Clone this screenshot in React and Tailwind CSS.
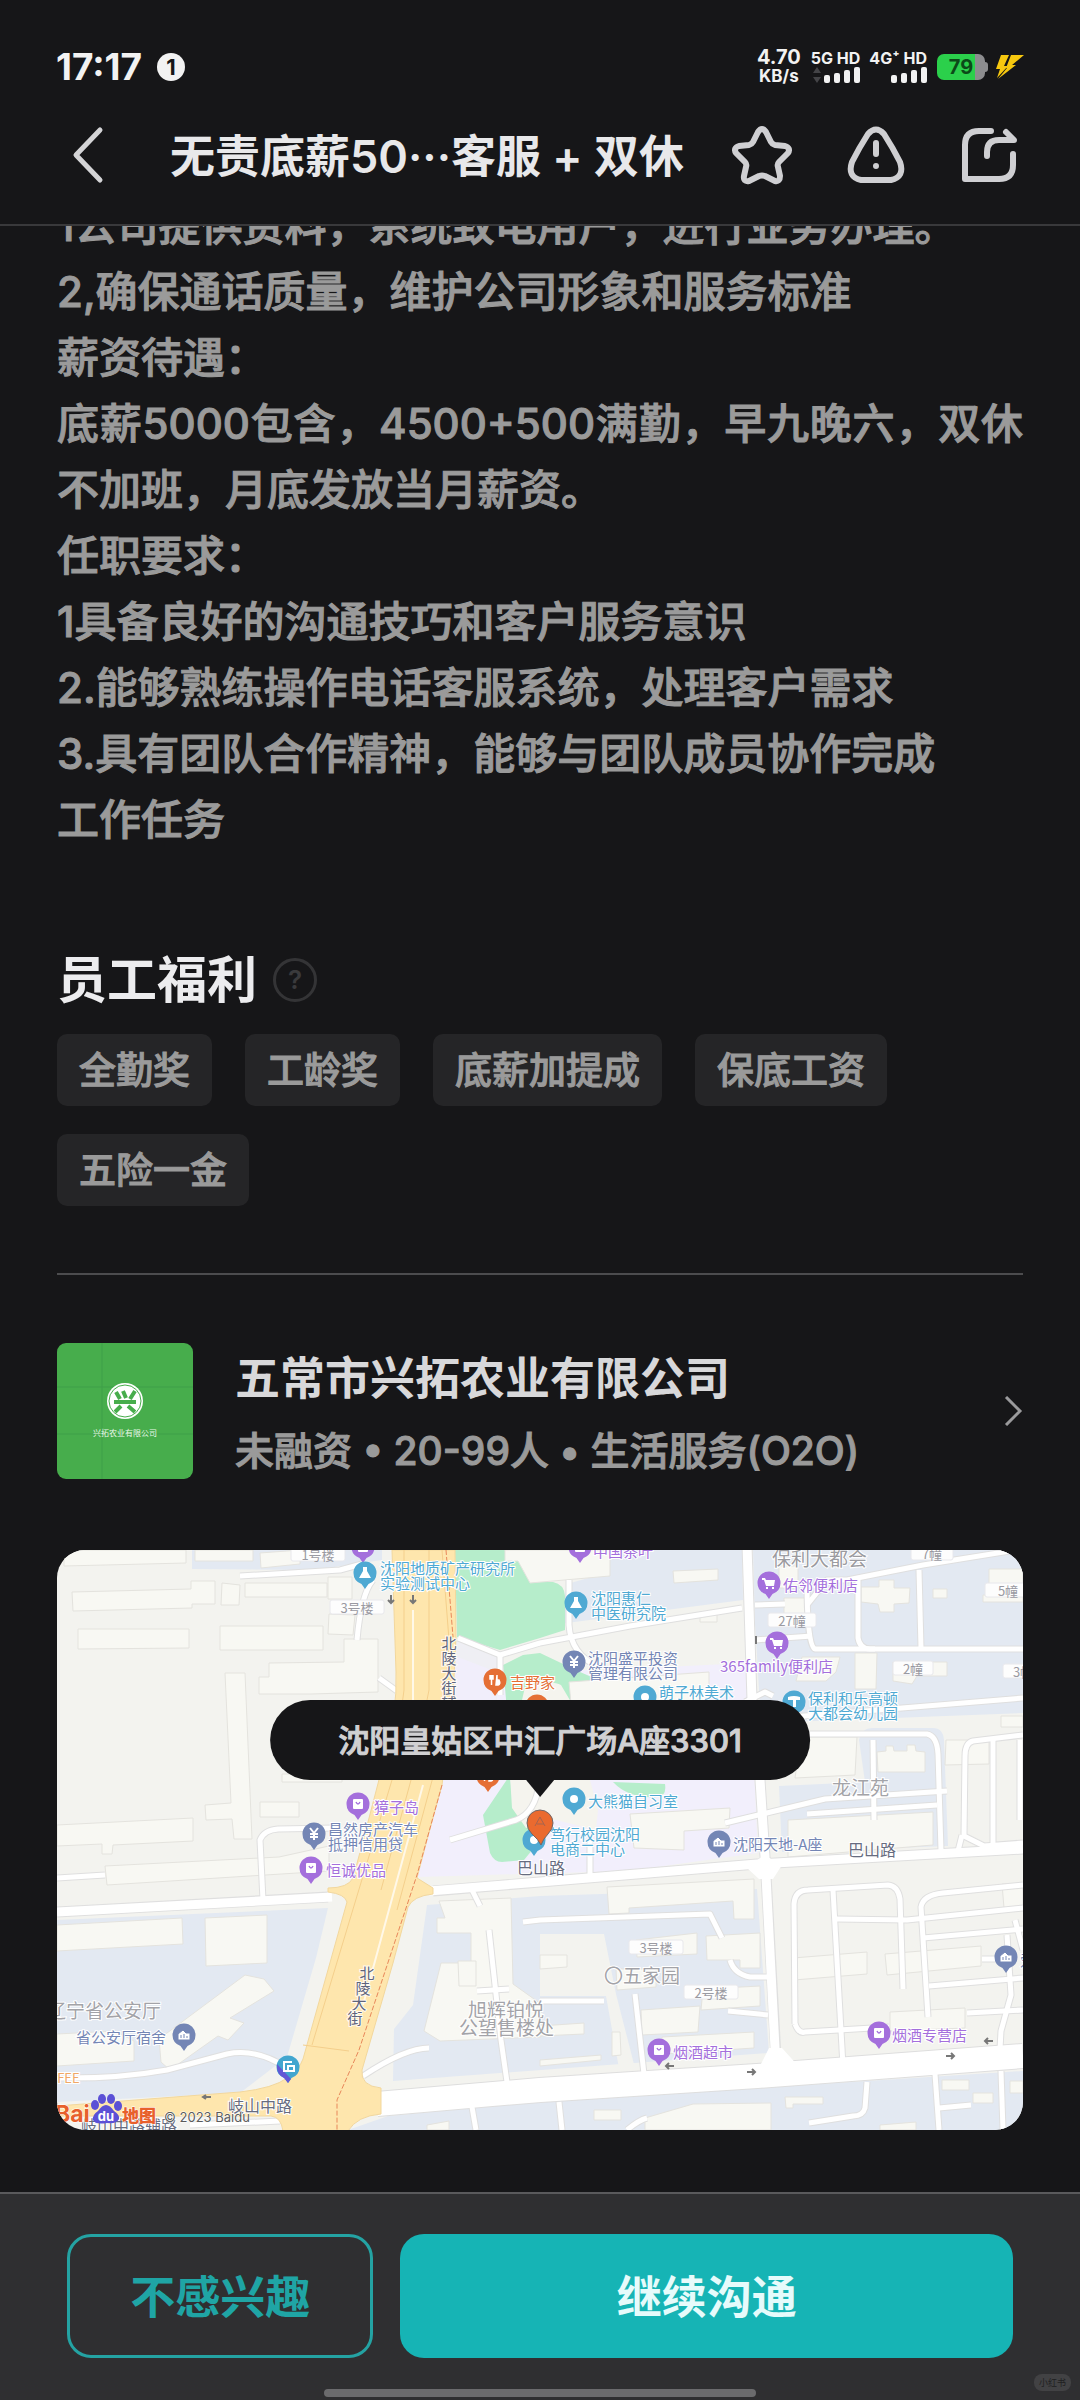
import React from "react";

const jobLines = [
  { text: "1公司提供资料，系统致电用户，进行业务办理。" },
  { text: "2,确保通话质量，维护公司形象和服务标准" },
  { text: "薪资待遇：" },
  { text: "底薪5000包含，4500+500满勤，早九晚六，双休", fill: true },
  { text: "不加班，月底发放当月薪资。" },
  { text: "任职要求：" },
  { text: "1具备良好的沟通技巧和客户服务意识" },
  { text: "2.能够熟练操作电话客服系统，处理客户需求" },
  { text: "3.具有团队合作精神，能够与团队成员协作完成" },
  { text: "工作任务" },
];

const benefits = ["全勤奖", "工龄奖", "底薪加提成", "保底工资", "五险一金"];

const BLUE = "#4fa9d3";
const NAVY = "#7486b5";
const PURPLE = "#a46fdc";
const ORANGE = "#e56f35";

const buildings = [
  "M7 0h122v13L7 16z", "M138 0h58v11h-58z", "M203 3l40-3v14l-39 4z", "M15 42l119-3v-8h24v23h-23v4L16 61z",
  "M165 33l18 2-1 20h-18z", "M188 33h82v14h-82z", "M271 27h24v22h-24z", "M21 79h111v19l-111 1z",
  "M163 76h103v24H163z", "M272 64l26 1-2 20-25-1z", "M212 113l75-1V89h34v53l-67 2h-52v-17h10z",
  "M168 123h20l7 166h-18l-2-20-26 1-1-15 26-2z", "M225 224h60v8h-60z", "M203 252h39v15h-39z",
  "M0 275l136-7v23l-80 4-1 9h-10v-10L0 296z", "M48 316l174-9 50-11v25l-222 14z",
  "M0 375l125-7 1 26L0 401z", "M148 368l62-3v48l-61 3z", "M102 489l86-64 19 4 10 12-44 27 14 5-16 17-10-4-48 34-9-8z",
  "M0 484l58-3 19 10v20L0 516z", "M382 351l72-3 2 86 28 20v33l-101 4-16-10 17-68h30v-30h-34v-15h8z", "M401 411h18v25h-17z",
  "M448 0h105v26l-80 7-12-22h-13z", "M616 21l45-2v11l-44 3z", "M643 64h17v8h-17z", "M512 132l140-10v36l-137 7z",
  "M722 16h19v22h-19z", "M727 48h22v24h-22z", "M804 37h18v-7h15v8h16l-1 15-15 1v8h-14l-2-8-17-2z", "M876 39h14v9h-14z",
  "M932 19h34v20h-34z", "M926 45h40v7h-40z", "M745 107h38l-4 15-10 9h-30z", "M798 103h22l-1 36h-21z", "M836 112h54v14h-30l-5 8-19-3z",
  "M744 187h56l-2 38-60 3z", "M820 202l9-1v-5h7l1 5h13v-6h8l1 6 9 1v20h-47z", "M889 190h43v24l-44 1z", "M944 166h22v11h-22z",
  "M573 264l100-6-1 20-45 3v19l-50-2z", "M731 270l145-8v33l-145 12z", "M550 337l147-8v40h-20l-1-18-104 7v5l-20 1z",
  "M579 390l61-7v21l-60 3z", "M649 386l54-3v35h-20v-8h-33z", "M646 439l57-3v20l-59 4z", "M559 419h40v18l-39 3z",
  "M584 460l59-4-2 26-56 3z", "M605 487l92-5v16l-92 6z", "M555 482h8l1 23-9 1z", "M483 476l44-3v11l-44 2z", "M483 510l61-5v5l-61 6z",
  "M483 405h27v12l-27 2z", "M736 408l74-6v22l-73 6z", "M828 404l96-8v20l-94 9z", "M833 462l75-4v20l-75 3z", "M945 334h21v23l-19 1z",
  "M588 568l48-14 78-1v27H588z", "M537 560h27v10h-27z", "M728 547h38v7h-30v4h-7z", "M885 530h27v10h-27z", "M916 543h20v10h-20z", "M953 531h13v12h-13z", "M823 575l36-3v8h-36z", "M370 575l22-4v9h-22z",
];

const minorRoads = [
  "M183 26l100-6 22-6", "M316 30q-12 14-16 60", "M401 88l42 17 40-12 90-17 112-18", "M443 105v40", "M322 128l18 13",
  "M512 30v45q2 30 30 42", "M698 55l30-1", "M698 90l57-4", "M688 152l20-10 8 4",
  "M750 55l20-25h20l76-15 100-16", "M801 30v58q2 11 12 11h153", "M862 20l2 78", "M750 30q0 66 8 69h60",
  "M735 167l231-19", "M710 184h160q10 2 11 20l3 96", "M816 190l1 80", "M750 264l130-9", "M668 273l100-24 122-8",
  "M966 185l-50 6q-8 2-8 15l-1 80 20 10 39-3", "M936 190v110", "M963 190v80", "M905 285l-5 20",
  "M206 350l-3-60q4-10 18-11l57-1", "M0 328l48-3", "M393 290l66-20q20-8 23-37", "M533 290v35",
  "M415 340l8 16", "M466 372l17-2 170-6 12 24", "M432 380l12 110 6 42", "M420 441l32-2", "M673 410q4 14 20 17h20",
  "M483 451h64", "M578 444l9 80", "M671 461l40 4",
  "M738 474l-1-120q1-14 14-14l80-5q10 1 12 14l3 90", "M776 340l10 176", "M738 474q4 10 10 8l84-5", "M780 369l70 1 116-12",
  "M966 335l-80 8q-20 2-22 14l7 110", "M866 388l100-9", "M958 370l8 30", "M950 385l4 60-10 36-1 18", "M872 436l94-8", "M910 463l56-3", "M925 409h20",
  "M306 526q42-28 66-28", "M0 528q60 1 110-8l60-16q30-6 60 14",
  "M810 532l-2 26q-2 8-12 8l-44 7", "M878 524l4 56", "M944 521l2 59", "M882 558l32-3", "M502 552l3 28", "M415 557l4 23", "M570 580q12-10 20-12", "M133 575l90-4",
];

const pins = [
  [306, -3, PURPLE, "bag"], [308, 23, BLUE, "flask"], [523, -3, PURPLE, "bag"], [519, 53, BLUE, "flask"], [712, 33, PURPLE, "cart"],
  [720, 93, PURPLE, "cart"], [517, 112, NAVY, "yen"], [438, 130, ORANGE, "food"], [480, 156, ORANGE, "food"], [588, 147, BLUE, "dot"],
  [737, 152, BLUE, "tee"], [431, 226, ORANGE, "food"], [301, 254, PURPLE, "bag"], [257, 284, NAVY, "yen"], [254, 318, PURPLE, "bag"],
  [517, 249, BLUE, "dot"], [477, 290, BLUE, "dot"], [662, 292, NAVY, "office"], [949, 407, NAVY, "office"], [127, 485, NAVY, "office"],
  [602, 500, PURPLE, "bag"], [822, 483, PURPLE, "bag"],
];

const labels = [
  [323, 17, BLUE, 15, "沈阳地质矿产研究所"], [323, 32, BLUE, 15, "实验测试中心"],
  [536, 0, PURPLE, 15, "中国茶叶"], [534, 47, BLUE, 15, "沈阳惠仁"], [534, 62, BLUE, 15, "中医研究院"],
  [531, 107, NAVY, 15, "沈阳盛平投资"], [531, 122, NAVY, 15, "管理有限公司"],
  [715, 7, "#9b9ba0", 19, "保利大都会"], [726, 34, PURPLE, 15, "佑邻便利店"],
  [663, 115, PURPLE, 15, "365family便利店"], [453, 131, ORANGE, 15, "吉野家"], [602, 141, BLUE, 15, "萌子林美术"],
  [751, 147, BLUE, 15, "保利和乐高顿"], [751, 162, BLUE, 15, "大都会幼儿园"],
  [317, 256, PURPLE, 15, "獐子岛"], [271, 278, NAVY, 15, "昌然房产汽车"], [271, 293, NAVY, 15, "抵押信用贷"],
  [269, 319, PURPLE, 15, "恒诚优品"], [531, 250, BLUE, 15, "大熊猫自习室"], [775, 236, "#a3a3a8", 19, "龙江苑"],
  [493, 283, BLUE, 15, "笃行校园沈阳"], [493, 298, BLUE, 15, "电商二中心"], [460, 317, "#676c80", 16, "巴山路"],
  [676, 293, NAVY, 15, "沈阳天地-A座"], [791, 299, "#676c80", 16, "巴山路"],
  [547, 424, "#a3a3a8", 19, "〇五家园"], [411, 458, "#a3a3a8", 19, "旭辉铂悦"], [402, 476, "#a3a3a8", 19, "公望售楼处"],
  [-10, 459, "#a3a3a8", 19, "辽宁省公安厅"], [19, 486, NAVY, 15, "省公安厅宿舍"], [963, 409, NAVY, 15, "爱"],
  [616, 501, PURPLE, 15, "烟酒超市"], [835, 484, PURPLE, 15, "烟酒专营店"],
  [171, 555, "#676c80", 16, "岐山中路"], [24, 575, "#676c80", 16, "岐山中路辅路"], [-7, 527, "#f0a866", 13, "FFEE"],
];

const tags = [
  [234, 4, 54, "1号楼"], [273, 57, 54, "3号楼"], [854, 3, 42, "7幢"], [928, 40, 46, "5幢"], [711, 70, 48, "27幢"],
  [836, 118, 40, "2幢"], [946, 121, 40, "3幢"], [572, 397, 54, "3号楼"], [627, 442, 54, "2号楼"],
];

function Glyph({ kind }) {
  if (kind === "flask") return <path d="M-2-6h4v4l4 7h-12l4-7z" fill="#fff" />;
  if (kind === "cart") return <path d="M-7-5h3l1 2h9l-1 6h-8l-2-6h-2zM-3 4h2v2h-2zM3 4h2v2h-2z" fill="#fff" />;
  if (kind === "yen") return <path d="M-4-6l4 5 4-5M0-1v7M-4 0h8M-4 3h8" fill="none" stroke="#fff" strokeWidth="2" />;
  if (kind === "food") return <path d="M-5-5v4h3v-4M-3.500-2v7M2-5v5h2q2 4-1 5h-2z" fill="#fff" stroke="#fff" strokeWidth="1.500" />;
  if (kind === "tee") return <path d="M-6-5q6-2 12 0v3h-4v7h-3v-7h-5z" fill="#fff" />;
  if (kind === "office") return <path d="M-6 5v-6l5-4 3 3h4v7zM-3 0v3M0-1v4M3 1v2" fill="#fff" stroke="#7486b5" strokeWidth="1" />;
  if (kind === "bag")
    return (
      <g>
        <rect x="-5" y="-5" width="10" height="10" rx="1" fill="#fff" />
        <path d="M-2-2q2 4 4 0" fill="none" stroke={PURPLE} strokeWidth="1.500" />
      </g>
    );
  return <circle r="4" fill="#fff" />;
}

const PIN = "M-11.500 0a11.500 11.500 0 1 1 23 0q0 8-8 11l-3.500 5-3.500-5q-8-3-8-11z";

function Vertical({ x, y, dx, text }) {
  return [...text].map((ch, i) => (
    <text key={i} x={x + dx * i} y={y + 15 * i} fontSize="15" fill="#5e647c" textAnchor="middle" dominantBaseline="central" stroke="#fffaf0" strokeWidth="2" paintOrder="stroke">
      {ch}
    </text>
  ));
}

function CityMap() {
  return (
    <svg viewBox="0 0 966 580" preserveAspectRatio="xMidYMid slice" className="block h-[580px] w-full" role="img" aria-label="地图">
      <rect width="966" height="580" fill="#f3f3ef" />
      <g fill="#e3e9f2">
        <path d="M135 0h190v10l-68 10-122-1zM538 0h147l1 50-184 24 8-40 28-8z" />
        <path d="M696 0h270v163l-262 10-6-100zM722 236l86-4-6-42q2-12 14-12h60q10 0 11 12l4 106-166 6z" />
        <path d="M0 370l271-12-12 50-29 99-47 36-183 9zM370 355l113-9 217-7 12 164-376 28 1-52 19-24z" />
        <path d="M331 566l152-14 483-31v59H291z" />
      </g>
      <path d="M398 100l48 20 96 0 150-7 9 190-131 18-210 6 10-92 15-8 12-80z" fill="#f2effc" />
      <path d="M483 384h64l12 60 20 78-16 2-14-78-66 0z" fill="#f3f3ef" />
      <g fill="#b6edcb">
        <path d="M398 0h72l8 20 5 12h13q11 2 12 14v34l-25 8-40 12-43-13z" />
        <path d="M446 115l20-10 17-2 40 19 28 12 40 22-20 16h-120z" />
        <path d="M453 225l-27 40 7 38q4 9 12 9l22-2 18-22-29-33zM556 232l52 2q2 12-8 13-28 2-44-15z" />
      </g>
      <path d="M398 90l42 16v50l-44-3z" fill="#efeff4" />
      <path d="M398 106l42 16-2 40h-42z" fill="#f1eefb" />
      <path d="M468 137q26-8 36-2l10 17 30 8v12h-84zM453 225l80 5 8 30-2 20-40-10-30 8-14-20z" fill="#f5f4ee" />
      <g fill="#f8f8f3" stroke="#e4e3de" strokeWidth="1">
        {buildings.map((d) => (
          <path key={d} d={d} />
        ))}
      </g>
      <g fill="none" strokeLinejoin="round">
        <g stroke="#dfdfdf" strokeWidth="7">
          {minorRoads.map((d) => (
            <path key={d} d={d} />
          ))}
        </g>
        <path d="M690-5L695 150l8 80 5 77 11 200M0 362l271-15M376 341l107-9 217-18 266-15" stroke="#dfdfdf" strokeWidth="11" />
        <path d="M320 554l163-14 217-14 266-20" stroke="#dedede" strokeWidth="26" />
        <g stroke="#fff" strokeWidth="5">
          {minorRoads.map((d) => (
            <path key={d} d={d} />
          ))}
        </g>
        <path d="M690-5L695 150l8 80 5 77 11 210M0 362l275-15M372 341l111-9 217-18 266-15" stroke="#fff" strokeWidth="9" />
        <path d="M320 554l163-14 217-14 266-20" stroke="#fff" strokeWidth="24" />
      </g>
      <path d="M690 318l17-13 18 10-9 14h-14zM696 530l16-32h13l18 20z" fill="#fff" />
      <path
        d="M335 0h63l1 87-3 60-11 88-15 55-10 38 16 10v6q-20 2-25 13l-15 56-31 107q-2 16 19 18v26q-24 2-33 17h-65q-2-14-12-15H0v-10l183-14q34-4 47-14 12-8 16-19l44-157q-2-8-19-10v-4q20 0 25-10l9-33 19-73q17-60 15-100z"
        fill="#fee6ad"
        stroke="#f2d79d"
        strokeWidth="1"
      />
      <g fill="none" stroke="#f4cf8c" strokeWidth="1">
        <path d="M347 0v140l-12 90-80 265M372 0v140l-18 90-30 110" />
        <path d="M385 0l7 90-6 100-46 170" />
        <path d="M246 495l46 6" />
      </g>
      <path d="M356 60v90M366 235l-60 220" stroke="#fff8e8" strokeWidth="2" fill="none" />
      <path d="M389 0l7 87M385 235l-25 90-58 175-22 50v30" fill="none" stroke="#e8875a" strokeWidth="1" strokeDasharray="5 2" />
      <g fill="none" stroke="#777" strokeWidth="2">
        <path d="M334 45v8m-3-3l3 3 3-3M356 45v8m-3-3l3 3 3-3M699 86v8" />
        <path d="M154 547h-8m3-2l-3 2 3 2M617 516h-8m3-3l-3 3 3 3M690 522h8m-3-3l3 3-3 3M936 491h-8m3-3l-3 3 3 3M889 506h8m-3-3l3 3-3 3" />
      </g>
      <g className="font-['Noto_Sans_CJK_SC',sans-serif]">
        {tags.map(([x, y, w, text]) => (
          <g key={x}>
            <rect x={x} y={y - 7} width={w} height="14" rx="2" fill="#fdfdfd" stroke="#e8e8ec" strokeWidth="1" />
            <text x={x + w / 2} y={y} fontSize="13" fill="#9a9aa2" textAnchor="middle" dominantBaseline="central">
              {text}
            </text>
          </g>
        ))}
        {labels.map(([x, y, color, size, text]) => (
          <text key={text + x} x={x} y={y} fontSize={size} fill={color} stroke="#fff" strokeWidth="2" paintOrder="stroke" dominantBaseline="central">
            {text}
          </text>
        ))}
        <Vertical x={392} y={92} dx={0} text="北陵大街辅路" />
        <Vertical x={310} y={422} dx={-4} text="北陵大街" />
      </g>
      {pins.map(([x, y, color, kind]) => (
        <g key={`${x}-${y}`} transform={`translate(${x} ${y})`}>
          <path d={PIN} fill={color} />
          <Glyph kind={kind} />
        </g>
      ))}
      <g transform="translate(231 517)">
        <path d={PIN} fill="#42a6cf" />
        <path d="M-11-3L3 12 0 16l-4-5q-8-4-7-14z" fill="#6258d6" />
        <path d="M4-5h-8v9h3M0-1h6v5H0z" fill="none" stroke="#fff" strokeWidth="2" />
      </g>
      <path d="M484 295q-3-6-9-11-5-5-5-11a13 13 0 0 1 26 0q0 6-5 11-5 5-7 11z" fill="#ea6a2f" stroke="#6f6668" strokeWidth="1" />
      <path d="M478 276l5-9 1 2 4 7M480 274h7" fill="none" stroke="#a5644f" strokeWidth="1" />
      <g className="font-['Inter','Noto_Sans_CJK_SC',sans-serif]">
        <text x="-2" y="572" fontSize="23" fontWeight="700" fill="#e8602c" stroke="#fff" strokeWidth="1" paintOrder="stroke">Bai</text>
        <g fill="#5b50d6">
          <ellipse cx="38" cy="555" rx="4" ry="5" />
          <ellipse cx="45" cy="549" rx="4" ry="5" />
          <ellipse cx="54" cy="549" rx="4" ry="5" />
          <ellipse cx="61" cy="556" rx="4" ry="5" />
          <path d="M49 555q4 0 8 6 6 4 5 8-2 5-12 4-12 2-14-3-1-5 5-9 4-6 8-6z" />
        </g>
        <text x="49" y="571" fontSize="13" fontWeight="700" fill="#fff" textAnchor="middle">du</text>
        <text x="65" y="572" fontSize="17" fontWeight="800" fill="#e8602c" stroke="#fff" strokeWidth="1" paintOrder="stroke">地图</text>
        <text x="107" y="572" fontSize="13" fill="#5b5b5b" stroke="#fff" strokeWidth="1" paintOrder="stroke">© 2023 Baidu</text>
      </g>
    </svg>
  );
}

function Bars() {
  return (
    <svg viewBox="0 0 36 18" className="h-[18px] w-[36px]" fill="#f2f2f2">
      <rect x="0" y="9" width="6" height="8" rx="2" />
      <rect x="10" y="7" width="6" height="10" rx="2" />
      <rect x="20" y="4" width="6" height="13" rx="2" />
      <rect x="30" y="1" width="6" height="16" rx="2" />
    </svg>
  );
}

function StatusBar() {
  return (
    <div className="flex h-[134px] items-center justify-between px-[56px] text-[#f2f2f2]">
      <div className="flex items-center gap-[15px]">
        <span className="text-[37px] leading-[40px] font-bold">17:17</span>
        <span className="flex size-[28px] items-center justify-center rounded-full bg-[#f2f2f2] text-[22px] leading-[28px] font-bold text-[#161618]">1</span>
      </div>
      <div className="flex items-center">
        <div className="mr-[10px] text-center text-[20px] leading-[19px] font-bold">
          <div>4.70</div>
          <div className="text-[17px]">KB/s</div>
        </div>
        <div className="mr-[9px] flex flex-col items-end">
          <span className="text-[16px] leading-[16px] font-bold">5G HD</span>
          <span className="flex items-center gap-[2px]">
            <svg viewBox="0 0 10 18" className="h-[18px] w-[10px]" fill="#444447">
              <path d="M5 1l4 6H1zM5 17l4-6H1z" />
            </svg>
            <Bars />
          </span>
        </div>
        <div className="mr-[10px] flex flex-col items-end">
          <span className="text-[16px] leading-[16px] font-bold">4G⁺ HD</span>
          <Bars />
        </div>
        <div className="flex items-center">
          <span className="flex h-[26px] w-[48px] items-center justify-center rounded-[7px] bg-linear-to-r from-[#2bd04b] from-80% to-[#8d8d8f] to-80% text-[20px] leading-[26px] font-bold text-[#0c4a18]">79</span>
          <span className="h-[10px] w-[3px] rounded-r-sm bg-[#8d8d8f]" />
        </div>
        <svg viewBox="0 0 28 24" className="ml-[8px] h-[24px] w-[28px]" fill="#f7c80f">
          <path d="M5 0h8L8 11h4L1 23l3-9H0z" />
          <path d="M15 0h13L16 10h4L2 24l9-11h-1z" />
        </svg>
      </div>
    </div>
  );
}

function IconButton({ label, children }) {
  return (
    <button type="button" aria-label={label} className="size-[60px] shrink-0">
      <svg viewBox="0 0 60 60" className="size-[60px]" fill="none" stroke="#cfcfd2" strokeWidth="6" strokeLinecap="round" strokeLinejoin="round">
        {children}
      </svg>
    </button>
  );
}

function Header() {
  return (
    <header className="border-b-2 border-[#39393b] bg-[#161618]">
      <StatusBar />
      <div className="flex h-[42px] items-center pr-[60px] pl-[56px]">
        <button type="button" aria-label="返回" className="mr-[54px] size-[60px] shrink-0">
          <svg viewBox="0 0 60 60" className="size-[60px]" fill="none" stroke="#d4d4d6" strokeWidth="5" strokeLinecap="round" strokeLinejoin="round">
            <path d="M44 5L20 30l24 25" />
          </svg>
        </button>
        <h1 className="min-w-0 flex-1 truncate pt-[4px] text-[45px] leading-[60px] font-semibold text-[#e8e8ea]">无责底薪50···客服 + 双休</h1>
        <div className="flex gap-[54px]">
          <IconButton label="收藏">
            <path d="M26 7q4-6 8 0l5 10q1 2 4 3l10 1q6 2 3 7l-9 9q-2 2-1 5l2 9q0 6-5 5l-10-5q-3-1-6 0l-10 5q-6 1-5-5l2-9q1-3-1-5l-9-9q-3-5 3-7l10-1q3-1 4-3z" />
          </IconButton>
          <IconButton label="举报">
            <path d="M22 9q8-9 16 0 9 14 16 28 5 15-9 18H15Q1 52 6 37q7-14 16-28zM30 18v11M30 41h0" />
          </IconButton>
          <IconButton label="分享">
            <path d="M31 6H19Q5 6 5 20v34h34q14 0 14-14V29M27 31v-4q0-12 12-12h15l-8-8" />
          </IconButton>
        </div>
      </div>
      <div className="h-[48px]" />
    </header>
  );
}

export default function App() {
  return (
    <div className="flex h-screen flex-col bg-[#161618] font-['Inter','Noto_Sans_CJK_SC',sans-serif]" lang="zh-CN">
      <Header />
      <main className="min-h-0 flex-1 overflow-hidden px-[57px]">
        <section className="-mt-[33px] text-[42px] leading-[66px] font-medium text-[#9a9a9a] [-webkit-text-stroke:1px_#9a9a9a]">
          {jobLines.map((line) => (
            <p key={line.text} className={line.fill ? "text-justify whitespace-nowrap [text-align-last:justify]" : "whitespace-nowrap"}>
              {line.text}
            </p>
          ))}
        </section>

        <section className="mt-[91px]">
          <div className="flex h-[72px] items-center gap-[16px]">
            <h2 className="text-[50px] leading-[72px] font-bold text-[#ececee]">员工福利</h2>
            <button type="button" aria-label="福利说明" className="flex size-[44px] items-center justify-center rounded-full border-[3px] border-[#343436] text-[26px] leading-[38px] font-semibold text-[#3a3a3c]">
              ?
            </button>
          </div>
          <ul className="mt-[18px] flex flex-wrap gap-x-[33px] gap-y-[28px]">
            {benefits.map((name) => (
              <li key={name} className="rounded-[10px] bg-[#252527] px-[22px] pt-[2px] text-[37px] leading-[70px] font-medium text-[#9a9a9a] [-webkit-text-stroke:1px_#9a9a9a]">
                {name}
              </li>
            ))}
          </ul>
        </section>

        <hr className="mt-[67px] border-t-2 border-[#4c4c4e]" />

        <a href="#company" className="mt-[68px] flex h-[136px] items-center">
          <svg viewBox="0 0 136 136" className="mr-[42px] size-[136px] shrink-0 rounded-[9px]">
            <rect width="136" height="136" fill="#47ad4c" />
            <path d="M45 0v136M0 44h136M0 91h136" stroke="#3f9f48" strokeWidth="1" />
            <circle cx="68" cy="58" r="18" fill="#fff" />
            <circle cx="68" cy="58" r="16" fill="none" stroke="#47ad4c" strokeWidth="1" />
            <path d="M59 49l4 7M66 48l3 7M78 48l-5 8M57 59h22M64 63l-6 6M71 63l7 6" stroke="#47ad4c" strokeWidth="4" />
            <text x="68" y="93" fontSize="8" fill="#e9f8e9" textAnchor="middle">兴拓农业有限公司</text>
          </svg>
          <div className="min-w-0 flex-1 pt-[10px]">
            <h3 className="text-[45px] leading-[70px] font-semibold text-[#d8d8da]">五常市兴拓农业有限公司</h3>
            <p className="text-[39px] leading-[74px] font-medium whitespace-nowrap text-[#9a9a9a] [-webkit-text-stroke:1px_#9a9a9a]">未融资 • 20-99人 • 生活服务(O2O)</p>
          </div>
          <svg viewBox="0 0 20 30" className="h-[30px] w-[20px]" fill="none" stroke="#9a9a9c" strokeWidth="3">
            <path d="M3 1l14 14L3 29" />
          </svg>
        </a>

        <div className="relative mt-[71px] overflow-hidden rounded-[28px]">
          <CityMap />
          <div className="absolute top-[150px] left-1/2 flex -translate-x-1/2 flex-col items-center">
            <div className="rounded-[40px] bg-[#161618] px-[68px] pt-[2px] text-[31px] leading-[78px] font-medium whitespace-nowrap text-[#d0d0d2] [-webkit-text-stroke:1px_#d0d0d2]">沈阳皇姑区中汇广场A座3301</div>
            <svg viewBox="0 0 28 17" className="h-[17px] w-[28px]" fill="#161618">
              <path d="M0 0h28L14 17z" />
            </svg>
          </div>
        </div>
      </main>

      <footer className="relative border-t-2 border-[#5a5a5c] bg-[#2f2f31] px-[67px] pt-[40px]">
        <div className="grid grid-cols-[1fr_2fr] gap-[27px]">
          <button type="button" className="h-[124px] rounded-[24px] border-[3px] border-[#24a3a3] pt-[3px] text-[45px] leading-[60px] font-bold text-[#1fa5a5]">不感兴趣</button>
          <button type="button" className="h-[124px] rounded-[24px] bg-[#16b4b5] pt-[3px] text-[45px] leading-[60px] font-bold text-[#e6fbfb]">继续沟通</button>
        </div>
        <div className="mx-auto mt-[31px] mb-[3px] h-[8px] w-[432px] rounded-full bg-[#6b6b6d]" />
        <span className="absolute right-[9px] bottom-[9px] rounded-[8px] bg-[#424244] px-[5px] text-[9px] leading-[17px] text-[#1f1f21]">小红书</span>
      </footer>
    </div>
  );
}
